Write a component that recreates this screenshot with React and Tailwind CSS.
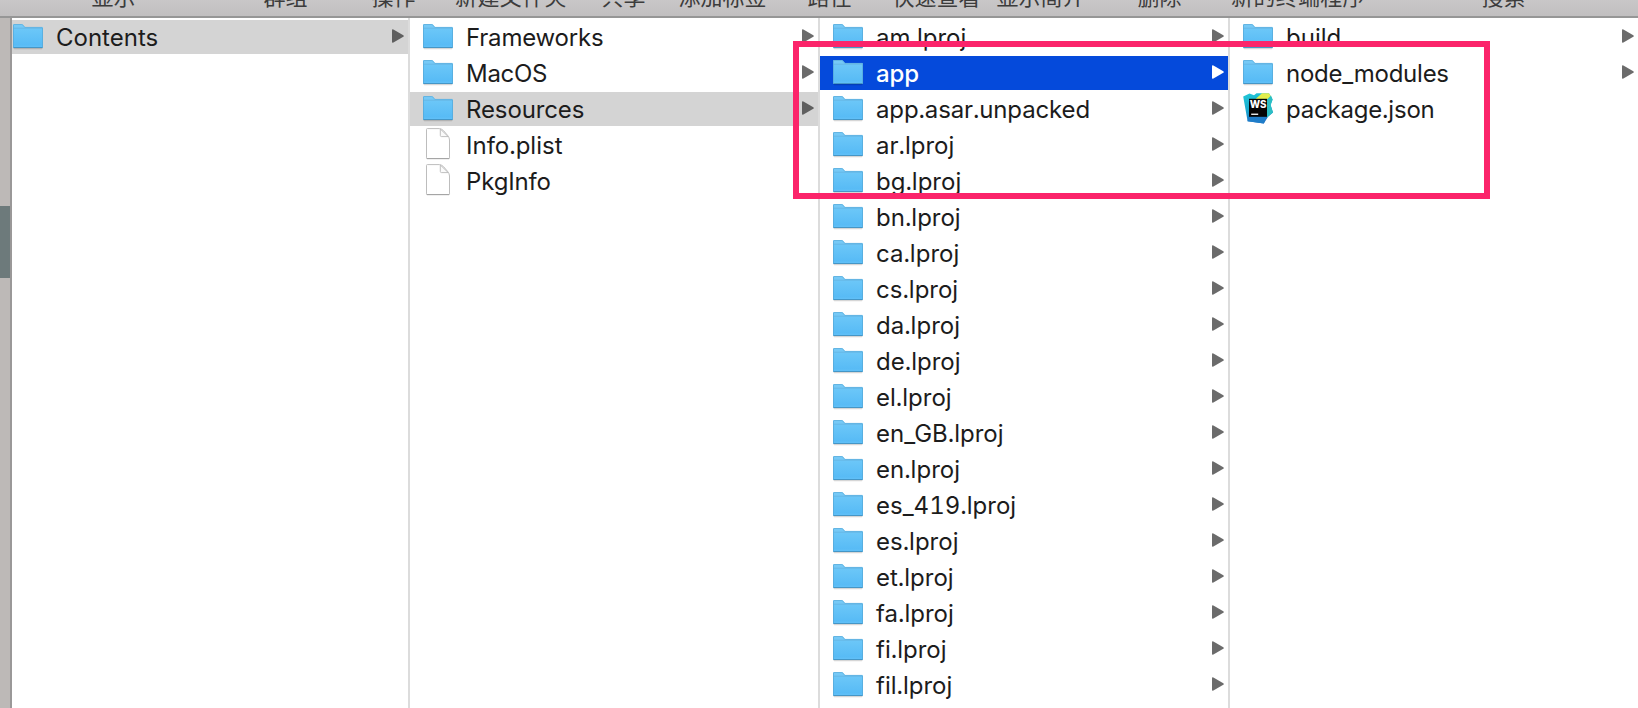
import React from "react";

const toolbar = [
  ["显示", "ml-[91px] w-[45px]"],
  ["群组", "ml-[127px] w-[45px]"],
  ["操作", "ml-[63px] w-[45px]"],
  ["新建文件夹", "ml-[39px] w-[112px] tracking-[0.4px]"],
  ["共享", "ml-[34px] w-[45px]"],
  ["添加标签", "ml-[32px] w-[89px]"],
  ["路径", "ml-[40px] w-[45px]"],
  ["快速查看", "ml-[40px] w-[89px]"],
  ["显示简介", "ml-[15px] w-[89px]"],
  ["删除", "ml-[52px] w-[45px]"],
  ["新的终端程序", "ml-[49px] w-[134px] tracking-[0.3px]"],
  ["搜索", "ml-[116px] w-[45px]"],
];

const contents = [{ name: "Contents", kind: "folder", open: true }];

const bundle = [
  { name: "Frameworks", kind: "folder", tracking: "tracking-[-0.2px]" },
  { name: "MacOS", kind: "folder", tracking: "tracking-[-0.3px]" },
  { name: "Resources", kind: "folder", open: true, tracking: "tracking-[-0.12px]" },
  { name: "Info.plist", kind: "file" },
  { name: "PkgInfo", kind: "file", tracking: "tracking-[-0.15px]" },
];

const resources = [
  "am.lproj",
  "app",
  "app.asar.unpacked",
  "ar.lproj",
  "bg.lproj",
  "bn.lproj",
  "ca.lproj",
  "cs.lproj",
  "da.lproj",
  "de.lproj",
  "el.lproj",
  "en_GB.lproj",
  "en.lproj",
  "es_419.lproj",
  "es.lproj",
  "et.lproj",
  "fa.lproj",
  "fi.lproj",
  "fil.lproj",
].map((name) => ({
  name,
  kind: "folder",
  active: name === "app",
  tracking: name.startsWith("app") ? "tracking-[-0.13px]" : "",
}));

const app = [
  { name: "build", kind: "folder" },
  { name: "node_modules", kind: "folder", tracking: "tracking-[-0.25px]" },
  { name: "package.json", kind: "webstorm", tracking: "tracking-[-0.2px]" },
];

function FolderIcon() {
  return (
    <svg width="30" height="34" viewBox="0 0 30 34" className="shrink-0">
      <rect x="0.5" y="27.6" width="29" height="1.6" rx="0.8" fill="#000" opacity="0.16" />
      <path d="M0 5.2Q0 4.1 1.1 4.1H8.6Q9.5 4.1 10.1 4.8L12 7H28.9Q30 7 30 8.1V14H0Z" fill="#76c9f6" />
      <path d="M0 8.4H30V26.9Q30 28 28.9 28H1.1Q0 28 0 26.9Z" fill="url(#folder-front)" />
      <path d="M0.6 4.5H8.6Q9.3 4.5 9.9 5.1L11.8 7.4H29.4" fill="none" stroke="#5fb0dd" strokeWidth="0.8" />
      <path d="M0.5 8.2H29.5" stroke="#62b4e2" strokeWidth="0.8" />
      <path d="M0.5 26.2H29.5" stroke="#6ecafc" strokeWidth="0.6" />
      <path d="M0.4 27.5H29.6" stroke="#4596c6" strokeWidth="1" />
      <path d="M0.4 5V27.5M29.6 8V27.5" stroke="#55a8d8" strokeWidth="0.8" />
    </svg>
  );
}

function FileIcon() {
  return (
    <svg width="30" height="34" viewBox="0 0 30 34" className="shrink-0">
      <path d="M3.5 1.4Q3.5 0.6 4.3 0.6H16.5Q18.5 0.8 20.5 2.6L24.6 7.4Q26.5 9.6 26.5 12V29.8Q26.5 30.6 25.7 30.6H4.3Q3.5 30.6 3.5 29.8Z" fill="#fff" stroke="#bdbdbd" strokeWidth="1" />
      <path d="M3.8 30.6H26.2" stroke="#a2a2a2" strokeWidth="1" />
      <path d="M17.3 1V7.4Q17.3 8.6 18.5 8.6H25.2Z" fill="#fafafa" stroke="#b8b8b8" strokeWidth="0.9" />
    </svg>
  );
}

function WebStormIcon() {
  return (
    <svg width="30" height="34" viewBox="0 0 30 34" className="shrink-0 overflow-visible">
      <path d="M4.6 29.2L0.2 4.4L6.5 1.4L11 3.2L13.5 1.2H26L29.6 7.6L27.6 13L30 20.5L25 24.8L20.8 31.4Z" fill="url(#ws-body)" />
      <path d="M12 7.5L19 1.2H26L28 4.6L26.6 7.5Z" fill="#e3ee4c" />
      <path d="M24 7.5L28 3.6L29.6 7.6L27.6 13L30 20.5L24 25.4Z" fill="#2bbfc4" />
      <path d="M4.6 29.2L5.4 24.8H23.6L20.8 31.4Z" fill="#1f7dc9" />
      <rect x="6" y="6.8" width="18" height="18" fill="#050505" />
      <text x="15.1" y="16.4" textAnchor="middle" fontFamily="Inter, sans-serif" fontSize="9.8" fontWeight="800" fill="#fff">WS</text>
      <rect x="8.2" y="21.6" width="7" height="1.3" fill="#fff" />
    </svg>
  );
}

const icons = { folder: FolderIcon, file: FileIcon, webstorm: WebStormIcon };

function Row({ item, inset }) {
  const Icon = icons[item.kind];
  const tone = item.active
    ? "bg-[#054adb] text-white font-medium"
    : item.open
      ? "bg-[#d4d4d4] text-[#1c1c1c]"
      : "text-[#1c1c1c]";
  return (
    <li className={`flex h-[34px] shrink-0 items-center pr-1 ${inset} ${tone}`}>
      <Icon />
      <span className={`ml-[13px] flex-1 whitespace-nowrap pt-0.5 text-[24px] leading-[34px] tabular-nums ${item.tracking || ""}`}>
        {item.name}
      </span>
      {item.kind === "folder" && (
        <svg width="12" height="14" viewBox="0 0 12 14" className="mb-0.5 shrink-0">
          <path d="M0 1.2Q0 -0.3 1.4 0.4L11.3 6.2Q12.3 7 11.3 7.8L1.4 13.6Q0 14.3 0 12.8Z" fill={item.active ? "#fff" : item.open ? "#5f5f5f" : "#6b6b6b"} />
        </svg>
      )}
    </li>
  );
}

function Column({ items, width, inset = "pl-[13px]", divider = "border-r-2 border-[#dcdcdc]" }) {
  return (
    <ul className={`flex shrink-0 flex-col gap-0.5 overflow-hidden pt-0.5 ${width} ${divider}`}>
      {items.map((item) => (
        <Row key={item.name} item={item} inset={inset} />
      ))}
    </ul>
  );
}

export default function App() {
  return (
    <div className="relative flex h-[708px] w-[1638px] flex-col overflow-hidden bg-white font-['Inter','Noto_Sans_CJK_SC',sans-serif]">
      <svg width="0" height="0" className="absolute">
        <defs>
          <linearGradient id="folder-front" x1="0" y1="0" x2="0" y2="1">
            <stop offset="0" stopColor="#6cc7f8" />
            <stop offset="1" stopColor="#54b9f5" />
          </linearGradient>
          <linearGradient id="ws-body" x1="0" y1="0" x2="0.3" y2="1">
            <stop offset="0" stopColor="#22c9d6" />
            <stop offset="0.55" stopColor="#1aa9cf" />
            <stop offset="1" stopColor="#1b6fc4" />
          </linearGradient>
        </defs>
      </svg>
      <header className="flex h-[18px] shrink-0 items-end overflow-hidden border-b-2 border-[#969696] bg-linear-to-b from-[#c9c7c8] to-[#c1bfc0] pb-2">
        {toolbar.map(([label, place]) => (
          <span key={label} className={`shrink-0 whitespace-nowrap text-center text-[22px] leading-[22px] text-[#3c3c3c] ${place}`}>
            {label}
          </span>
        ))}
      </header>
      <main className="flex min-h-0 flex-1">
        <aside className="flex w-3 shrink-0 flex-col border-r-2 border-[#9a9898] bg-[#bdb9b7] pt-[188px]">
          <div className="h-[72px] bg-[#6d7a7b]" />
        </aside>
        <Column items={contents} width="w-[398px]" inset="pl-px" />
        <Column items={bundle} width="w-[410px]" />
        <Column items={resources} width="w-[410px]" />
        <Column items={app} width="w-[408px]" divider="" />
      </main>
      <div className="absolute left-[793px] top-[41px] h-[158px] w-[697px] border-[6px] border-[#fb246a]" />
    </div>
  );
}
